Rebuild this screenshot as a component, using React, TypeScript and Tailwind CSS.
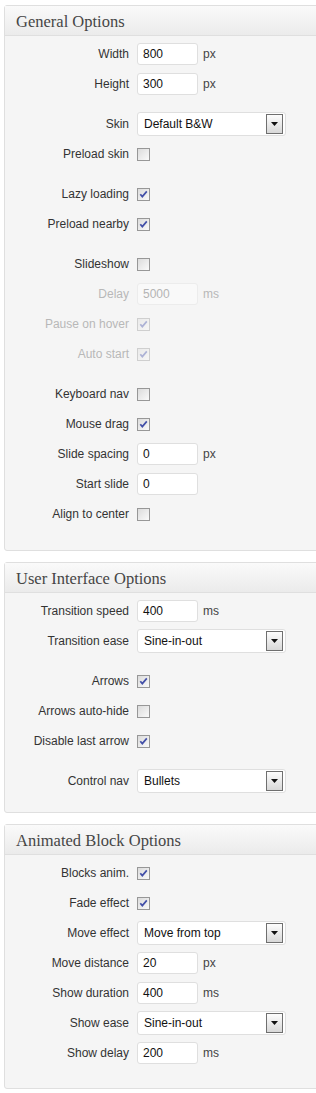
import type { ReactNode } from 'react'

type Row =
  | { kind: 'text'; label: string; value: string; unit?: string; disabled?: boolean; gap?: boolean }
  | { kind: 'check'; label: string; checked: boolean; disabled?: boolean; gap?: boolean }
  | { kind: 'select'; label: string; value: string; gap?: boolean }

const panels: { title: string; pb: string; rows: Row[] }[] = [
  {
    title: 'General Options',
    pb: 'pb-[21px]',
    rows: [
      { kind: 'text', label: 'Width', value: '800', unit: 'px' },
      { kind: 'text', label: 'Height', value: '300', unit: 'px' },
      { kind: 'select', label: 'Skin', value: 'Default B&W', gap: true },
      { kind: 'check', label: 'Preload skin', checked: false },
      { kind: 'check', label: 'Lazy loading', checked: true, gap: true },
      { kind: 'check', label: 'Preload nearby', checked: true },
      { kind: 'check', label: 'Slideshow', checked: false, gap: true },
      { kind: 'text', label: 'Delay', value: '5000', unit: 'ms', disabled: true },
      { kind: 'check', label: 'Pause on hover', checked: true, disabled: true },
      { kind: 'check', label: 'Auto start', checked: true, disabled: true },
      { kind: 'check', label: 'Keyboard nav', checked: false, gap: true },
      { kind: 'check', label: 'Mouse drag', checked: true },
      { kind: 'text', label: 'Slide spacing', value: '0', unit: 'px' },
      { kind: 'text', label: 'Start slide', value: '0' },
      { kind: 'check', label: 'Align to center', checked: false },
    ],
  },
  {
    title: 'User Interface Options',
    pb: 'pb-[16px]',
    rows: [
      { kind: 'text', label: 'Transition speed', value: '400', unit: 'ms' },
      { kind: 'select', label: 'Transition ease', value: 'Sine-in-out' },
      { kind: 'check', label: 'Arrows', checked: true, gap: true },
      { kind: 'check', label: 'Arrows auto-hide', checked: false },
      { kind: 'check', label: 'Disable last arrow', checked: true },
      { kind: 'select', label: 'Control nav', value: 'Bullets', gap: true },
    ],
  },
  {
    title: 'Animated Block Options',
    pb: 'pb-[20px]',
    rows: [
      { kind: 'check', label: 'Blocks anim.', checked: true },
      { kind: 'check', label: 'Fade effect', checked: true },
      { kind: 'select', label: 'Move effect', value: 'Move from top' },
      { kind: 'text', label: 'Move distance', value: '20', unit: 'px' },
      { kind: 'text', label: 'Show duration', value: '400', unit: 'ms' },
      { kind: 'select', label: 'Show ease', value: 'Sine-in-out' },
      { kind: 'text', label: 'Show delay', value: '200', unit: 'ms' },
    ],
  },
]

function Checkbox({ checked, disabled }: { checked: boolean; disabled?: boolean }) {
  return (
    <svg width="13" height="13" viewBox="0 0 13 13" className={disabled ? 'opacity-40' : ''}>
      <defs>
        <linearGradient id="cbfill" x1="0" y1="0" x2="1" y2="1">
          <stop offset="0" stopColor="#dadada" />
          <stop offset="1" stopColor="#fbfbfb" />
        </linearGradient>
      </defs>
      <rect x="0.5" y="0.5" width="12" height="12" fill="url(#cbfill)" stroke="#979797" />
      {checked && (
        <path d="M3.3 6.2 L5.3 8.6 L9.8 3.4" fill="none" stroke="#4350a8" strokeWidth="1.7" />
      )}
    </svg>
  )
}

function Field({ row }: { row: Row }): ReactNode {
  if (row.kind === 'check') return <Checkbox checked={row.checked} disabled={row.disabled} />
  if (row.kind === 'select')
    return (
      <div className="flex h-[24px] w-[149px] items-center justify-between rounded-[3px] border border-[#dfdfdf] bg-white pl-[6px] pr-[2px] text-[#111]">
        <span>{row.value}</span>
        <span className="flex h-[20px] w-[17px] items-center justify-center border border-[#6f6f6f] bg-gradient-to-b from-[#fdfdfd] to-[#d8d8d8]">
          <svg width="7" height="4" viewBox="0 0 7 4">
            <path d="M0 0 H7 L3.5 4 Z" fill="#111" />
          </svg>
        </span>
      </div>
    )
  return (
    <div className="flex items-center">
      <div
        className={`flex h-[22px] w-[61px] items-center rounded-[3px] border pl-[5px] ${
          row.disabled ? 'border-[#ececec] bg-[#f9f9f9] text-[#b4b4b4]' : 'border-[#dfdfdf] bg-white text-[#111]'
        }`}
      >
        {row.value}
      </div>
      {row.unit && (
        <span className={`ml-[5px] ${row.disabled ? 'text-[#b8b8b8]' : 'text-[#444]'}`}>{row.unit}</span>
      )}
    </div>
  )
}

export default function App() {
  return (
    <div
      className="w-[316px] overflow-hidden bg-white pt-[5px] pb-[4px] text-[12px]"
      style={{ fontFamily: '"Liberation Sans", Arial, sans-serif' }}
    >
      {panels.map((panel, i) => (
        <section
          key={panel.title}
          className={`ml-[4px] mr-[-20px] rounded-[3px] border border-[#dfdfdf] bg-[#f5f5f5] ${i > 0 ? 'mt-[11px]' : ''}`}
        >
          <h2
            className="flex h-[30px] items-center border-b border-[#dfdfdf] bg-gradient-to-b from-[#fafafa] to-[#ebebeb] pl-[11px] pt-[3px] text-[16.5px] text-[#464646]"
            style={{ fontFamily: '"Liberation Serif", Georgia, serif' }}
          >
            {panel.title}
          </h2>
          <div className={`pt-[3px] ${panel.pb}`}>
            {panel.rows.map((row) => (
              <div key={row.label} className={`flex h-[30px] items-center ${row.gap ? 'mt-[10px]' : ''}`}>
                <span
                  className={`w-[124px] shrink-0 text-right ${
                    'disabled' in row && row.disabled ? 'text-[#b8b8b8]' : 'text-[#333]'
                  }`}
                >
                  {row.label}
                </span>
                <div className="ml-[8px] flex items-center">
                  <Field row={row} />
                </div>
              </div>
            ))}
          </div>
        </section>
      ))}
    </div>
  )
}
